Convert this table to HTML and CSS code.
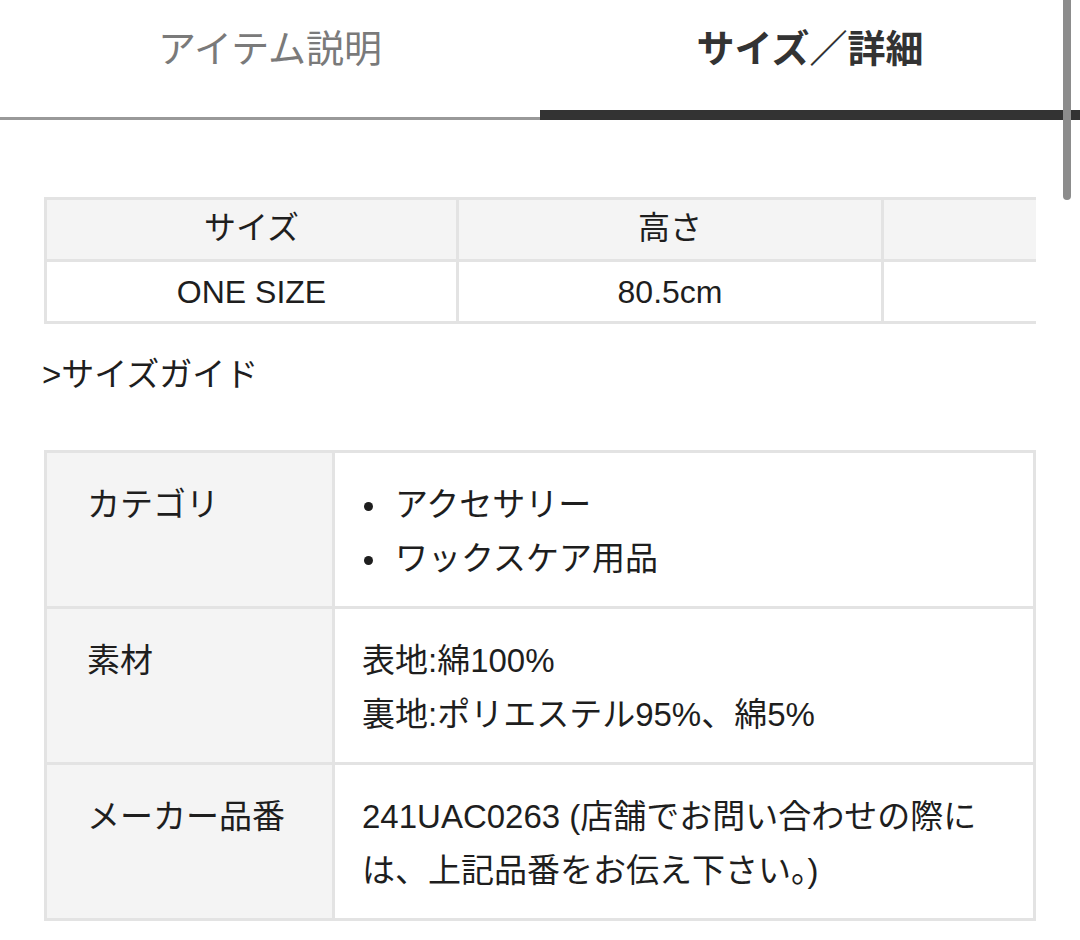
FILE: index.html
```html
<!DOCTYPE html>
<html lang="ja">
<head>
<meta charset="utf-8">
<title>サイズ／詳細</title>
<link rel="stylesheet" href="styles.css">
</head>
<body>
<div class="page">
  <nav class="tabs">
    <div class="tab">アイテム説明</div>
    <div class="tab tab-active">サイズ／詳細</div>
  </nav>
  <main class="content">
    <div class="size-wrap">
      <table class="size-table">
        <colgroup><col class="c1"><col class="c2"><col class="c3"></colgroup>
        <thead>
          <tr><th>サイズ</th><th>高さ</th><th></th></tr>
        </thead>
        <tbody>
          <tr><td>ONE SIZE</td><td>80.5cm</td><td></td></tr>
        </tbody>
      </table>
    </div>
    <p class="guide">&gt;サイズガイド</p>
    <table class="detail-table">
      <tr>
        <th>カテゴリ</th>
        <td>
          <ul class="cat-list">
            <li>アクセサリー</li>
            <li>ワックスケア用品</li>
          </ul>
        </td>
      </tr>
      <tr>
        <th>素材</th>
        <td>表地:綿100%<br>裏地:ポリエステル95%、綿5%</td>
      </tr>
      <tr>
        <th>メーカー品番</th>
        <td>241UAC0263 (店舗でお問い合わせの際には、上記品番をお伝え下さい。)</td>
      </tr>
    </table>
  </main>
  <div class="scrollbar"></div>
</div>
</body>
</html>
```

FILE: styles.css
```css
* { box-sizing: border-box; }
html, body { margin: 0; padding: 0; background: #fff; }
body {
  font-family: "Liberation Sans", "Noto Sans CJK JP", sans-serif;
  color: #1e1e1e;
  width: 1080px;
  overflow: hidden;
}
.page { position: relative; width: 1080px; min-height: 940px; }

.tabs { display: flex; height: 120px; }
.tab {
  flex: 1 1 0;
  text-align: center;
  font-size: 38px;
  line-height: 56px;
  padding-top: 21px;
  color: #7a7a7a;
  border-bottom: 3px solid #999;
}
.tab-active {
  color: #333;
  font-weight: bold;
  border-bottom: 10px solid #333;
}

.content { padding: 77px 44px 0 44px; }

.size-wrap { width: 992px; overflow: hidden; }
.size-table {
  border-collapse: collapse;
  table-layout: fixed;
  width: 1250px;
  font-size: 32px;
}
.size-table .c1 { width: 412px; }
.size-table .c2 { width: 425px; }
.size-table .c3 { width: 413px; }
.size-table th, .size-table td {
  border: 3px solid #e3e3e3;
  height: 62px;
  padding: 0;
  text-align: center;
  font-weight: normal;
  color: #1e1e1e;
  line-height: 40px;
}
.size-table th { background: #f4f4f4; padding-bottom: 4px; }

.guide {
  margin: 28px 0 0 -2px;
  font-size: 33px;
  line-height: 46px;
  color: #1e1e1e;
}

.detail-table {
  margin-top: 52px;
  width: 992px;
  border-collapse: collapse;
  table-layout: fixed;
  font-size: 33px;
}
.detail-table th, .detail-table td {
  border: 3px solid #e3e3e3;
  vertical-align: top;
  line-height: 54px;
  text-align: left;
  font-weight: normal;
  color: #1e1e1e;
}
.detail-table th {
  width: 288px;
  background: #f4f4f4;
  padding: 25px 16px 20px 40px;
}
.detail-table td {
  padding: 25px 26px 20px 27px;
}
.cat-list {
  margin: 0;
  padding: 0;
  list-style: none;
}
.cat-list li { display: flex; align-items: center; }
.cat-list li::before {
  content: "";
  flex: none;
  width: 9px;
  height: 9px;
  margin: 2px 22px 0 2px;
  border-radius: 50%;
  background: #1e1e1e;
}

.scrollbar {
  position: absolute;
  top: 0;
  left: 1063px;
  width: 8px;
  height: 200px;
  border-radius: 0 0 4px 4px;
  background: #8c8c8c;
}
```
